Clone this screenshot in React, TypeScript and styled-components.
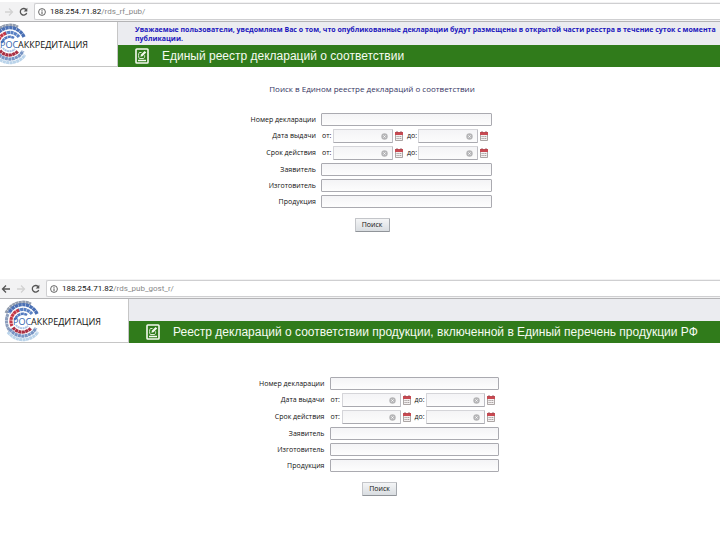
import React, { useId } from "react";
import styled, { createGlobalStyle } from "styled-components";

const GlobalStyle = createGlobalStyle`
  * { box-sizing: border-box; }
  body { margin: 0; background: #fff; overflow-x: hidden; }
  input, button { font: inherit; }
`;

const Page = styled.main`
  display: flex;
  flex-direction: column;
  gap: 47px;
  padding-top: 2px;
  font-family: "Open Sans", "Noto Sans", sans-serif;
  font-size: 7px;
  line-height: 10px;
  color: #111;
`;

const Registry = styled.section`
  display: flex;
  flex-direction: column;
`;

const BrowserBar = styled.div`
  display: flex;
  align-items: center;
  height: 20px;
  background: #f2f2f3;
  border-bottom: 1px solid #b4b4b6;
`;

const NavButtons = styled.div<{ $wide: boolean }>`
  display: flex;
  flex: none;
  align-items: center;
  justify-content: flex-end;
  gap: 5px;
  width: ${(p) => (p.$wide ? 46 : 34)}px;
  padding-right: 6px;
`;

const NavButton = styled.button`
  display: flex;
  flex: none;
  padding: 0;
  border: 0;
  background: none;
  color: #555;
  &:disabled { color: #d2d2d2; }
`;

const AddressBar = styled.div`
  display: flex;
  flex: 1;
  align-items: center;
  gap: 4px;
  height: 17px;
  padding-left: 3px;
  border: 1px solid #cfcfd1;
  border-right: 0;
  border-radius: 2px 0 0 2px;
  background: #fff;
`;

const Address = styled.span`
  font-family: Roboto, "Open Sans", sans-serif;
  font-size: 8px;
  color: #888;
  white-space: nowrap;
  b { font-weight: 400; color: #111; }
`;

const Header = styled.header<{ $wide: boolean }>`
  display: flex;
  height: ${(p) => (p.$wide ? 44 : 45)}px;
`;

const LogoLink = styled.a<{ $wide: boolean }>`
  position: relative;
  display: flex;
  flex: none;
  align-items: center;
  width: ${(p) => (p.$wide ? 129 : 118)}px;
  padding-left: ${(p) => (p.$wide ? 13 : 0)}px;
  overflow: hidden;
  border-right: 1px solid #c6c6c6;
  border-bottom: 1px solid #c6c6c6;
  background: #fff;
  text-decoration: none;
`;

const Emblem = styled.svg<{ $wide: boolean }>`
  position: absolute;
  top: 1px;
  left: ${(p) => (p.$wide ? 2 : -11)}px;
`;

const LogoText = styled.span`
  position: relative;
  padding-top: 2px;
  font-size: 9px;
  color: #111;
  white-space: nowrap;
  b { font-weight: 400; color: #2f63ad; }
`;

const HeaderBody = styled.div`
  display: flex;
  flex: 1;
  min-width: 0;
  flex-direction: column;
  background: #ebecf0;
`;

const Notice = styled.p`
  flex: 1;
  margin: 0;
  padding: 3px 4px 0 17px;
  font-family: "Open Sans", "Noto Sans", sans-serif;
  font-size: 7px;
  font-weight: 700;
  line-height: 9px;
  color: #1b16bd;
`;

const TitleBar = styled.div`
  display: flex;
  align-items: center;
  gap: 13px;
  height: 22px;
  padding-left: 17px;
  background: #307b1b;
  color: #f6fbf2;
`;

const Title = styled.h1`
  margin: 0;
  font-family: "Liberation Sans", Arial, sans-serif;
  font-size: 12px;
  font-weight: 400;
  line-height: 18px;
  white-space: nowrap;
`;

const Form = styled.form<{ $shifted: boolean }>`
  display: flex;
  flex-direction: column;
  align-items: center;
  padding-top: ${(p) => (p.$shifted ? 34 : 15)}px;
  padding-left: ${(p) => (p.$shifted ? 39 : 24)}px;
`;

const Caption = styled.h2`
  margin: 0 0 17px;
  font-size: 8px;
  font-weight: 400;
  line-height: 14px;
  color: #35355f;
`;

const Fields = styled.div<{ $width: number }>`
  display: grid;
  grid-template-columns: 68px ${(p) => p.$width}px;
  column-gap: 5px;
  row-gap: 3px;
  align-items: center;
  padding-right: 4px;
`;

const Label = styled.label`
  text-align: right;
  white-space: nowrap;
`;

const RowLabel = styled.span`
  text-align: right;
  white-space: nowrap;
`;

const TextInput = styled.input`
  width: 100%;
  min-width: 0;
  height: 13px;
  padding: 0 3px;
  border: 1px solid #aaaab0;
  border-radius: 1px;
  background: linear-gradient(#f4f4f6, #fdfdfd);
`;

const DateRow = styled.div`
  display: flex;
  align-items: center;
  gap: 2px;
  height: 14px;
  padding: 0 2px 0 1px;
`;

const DateLabel = styled.label`
  flex: none;
  width: 9px;
  white-space: nowrap;
`;

const DateBox = styled.div`
  display: flex;
  flex: 1;
  min-width: 0;
  align-items: center;
  height: 14px;
  padding-right: 4px;
  border: 1px solid #d5d5d9;
  border-right-color: #bdbdc3;
  border-bottom-color: #a9a9af;
  border-radius: 1px;
  background: linear-gradient(#f4f4f6, #fcfcfc);
`;

const DateInput = styled.input`
  flex: 1;
  width: 0;
  min-width: 0;
  padding: 0 2px;
  border: 0;
  background: none;
  line-height: 10px;
`;

const IconButton = styled.button`
  display: flex;
  flex: none;
  padding: 0;
  border: 0;
  background: none;
`;

const CalendarButton = styled(IconButton)`
  margin-right: 2px;
`;

const SearchButton = styled.button`
  width: 35px;
  height: 14px;
  margin-top: 10px;
  padding: 0;
  border: 1px solid #c3c5c9;
  border-bottom-color: #909499;
  border-right-color: #a4a8ad;
  border-radius: 1px;
  background: linear-gradient(#f4f5f6, #d9dde1);
  color: #111;
`;

function Arrow({ back = false }: { back?: boolean }) {
  return (
    <svg width="10" height="10" viewBox="0 0 10 10" fill="none" stroke="currentColor" strokeWidth="1.3">
      <path d={back ? "M9 5H1.5M5 1.5 1.5 5 5 8.5" : "M1 5h7.5M5 1.5 8.5 5 5 8.5"} />
    </svg>
  );
}

function ReloadIcon() {
  return (
    <svg width="9" height="10" viewBox="0 0 9 10">
      <path d="M7.1 2.6A3.3 3.3 0 1 0 7.7 6" fill="none" stroke="currentColor" strokeWidth="1.3" />
      <path d="M8.3.8v3.6H4.7z" fill="currentColor" />
    </svg>
  );
}

function InfoIcon() {
  return (
    <svg width="8" height="8" viewBox="0 0 8 8" fill="none" stroke="#555">
      <circle cx="4" cy="4" r="3.4" strokeWidth=".9" />
      <path d="M4 1.8v1M4 3.4v2.8" />
    </svg>
  );
}

function EmblemRings({ wide }: { wide: boolean }) {
  return (
    <Emblem $wide={wide} width="40" height="42" viewBox="0 0 40 42" fill="none" aria-hidden="true">
      <path d="M4 13A18.5 18.5 0 0 1 29 4" stroke="#929daf" strokeWidth="3" strokeDasharray="3 .4" />
      <path d="M6 32A18.5 18.5 0 0 0 36 32" stroke="#b9d3ea" strokeWidth="3" strokeDasharray="3 .4" />
      <path d="M35 14A15.5 15.5 0 0 0 7 13" stroke="#4a70b5" strokeWidth="3.4" strokeDasharray="3.4 .4" />
      <path d="M6 14A16 16 0 0 0 8 31" stroke="#8c9ebd" strokeWidth="3" strokeDasharray="3 .4" />
      <path d="M8 29A15 15 0 0 0 34 28" stroke="#7794c4" strokeWidth="3.2" strokeDasharray="3 .4" />
      <path d="M30 14A11.5 11.5 0 0 0 16 10.5" stroke="#5b82c4" strokeWidth="3.2" strokeDasharray="3 .4" />
      <path d="M17 10.2A11.5 11.5 0 0 0 10 26" stroke="#c33847" strokeWidth="3.2" strokeDasharray="3 .4" />
      <path d="M11 27.5A11.5 11.5 0 0 0 29 28" stroke="#a92f43" strokeWidth="3.2" strokeDasharray="3 .4" />
      <path d="M25 15A8 8 0 0 0 13 20" stroke="#527ac0" strokeWidth="2.6" strokeDasharray="3 .4" />
      <path d="M14 25A8 8 0 0 0 26 26" stroke="#abc5e5" strokeWidth="2" strokeDasharray="2 .5" />
    </Emblem>
  );
}

function RegistryIcon() {
  return (
    <svg width="14" height="16" viewBox="0 0 14 16" fill="none" aria-hidden="true">
      <rect x="1" y="1" width="12" height="14" rx=".8" stroke="#f5faef" strokeWidth="1.6" />
      <path d="M3 12.5h8" stroke="#f5faef" strokeWidth="1.5" />
      <path d="M6.5 4.5H4.3c-1 1.3-1 4.6 0 6h4.4c1-1 1.1-2 .9-3.2" stroke="#dcebd4" />
      <path d="m5.4 8.8.6-2.2L9.6 3l1.6 1.5-3.7 3.7z" fill="#f5faef" />
    </svg>
  );
}

function ClearIcon() {
  return (
    <svg width="7" height="7" viewBox="0 0 7 7">
      <circle cx="3.5" cy="3.5" r="3.2" fill="#b5b5b7" />
      <path d="m2.4 2.4 2.2 2.2m0-2.2L2.4 4.6" stroke="#fff" strokeWidth=".8" />
    </svg>
  );
}

function CalendarIcon() {
  return (
    <svg width="8" height="10" viewBox="0 0 8 10">
      <path d="M.5 2h7v7.5h-7z" fill="#f4f1f1" stroke="#98908f" strokeWidth=".8" />
      <path d="M0 1h8v3H0z" fill="#c84a52" />
      <path d="M2 0v2M6 0v2" stroke="#8b4a50" strokeWidth=".8" />
      <path d="M1.5 5.5h5M1.5 7.5h5" stroke="#a29b9b" strokeDasharray="1.2 .6" />
    </svg>
  );
}

function DateField({ label, name }: { label: string; name: string }) {
  const id = useId();
  return (
    <>
      <DateLabel htmlFor={id}>{label}</DateLabel>
      <DateBox>
        <DateInput id={id} name={name} type="text" />
        <IconButton type="button" aria-label="Очистить"><ClearIcon /></IconButton>
      </DateBox>
      <CalendarButton type="button" aria-label="Календарь"><CalendarIcon /></CalendarButton>
    </>
  );
}

function DateRange({ label, name }: { label: string; name: string }) {
  const id = useId();
  return (
    <>
      <RowLabel id={id}>{label}</RowLabel>
      <DateRow role="group" aria-labelledby={id}>
        <DateField label="от:" name={`${name}-from`} />
        <DateField label="до:" name={`${name}-to`} />
      </DateRow>
    </>
  );
}

function TextField({ label, name }: { label: string; name: string }) {
  const id = useId();
  return (
    <>
      <Label htmlFor={id}>{label}</Label>
      <TextInput id={id} name={name} type="text" />
    </>
  );
}

interface RegistryProps {
  path: string;
  title: string;
  notice?: string;
  caption?: string;
  wide?: boolean;
}

function RegistryPage({ path, title, notice, caption, wide = false }: RegistryProps) {
  return (
    <Registry>
      <BrowserBar>
        <NavButtons $wide={wide}>
          {wide && <NavButton aria-label="Назад"><Arrow back /></NavButton>}
          <NavButton aria-label="Вперёд" disabled><Arrow /></NavButton>
          <NavButton aria-label="Обновить"><ReloadIcon /></NavButton>
        </NavButtons>
        <AddressBar>
          <InfoIcon />
          <Address><b>188.254.71.82</b>{path}</Address>
        </AddressBar>
      </BrowserBar>
      <Header $wide={wide}>
        <LogoLink href="#" $wide={wide}>
          <EmblemRings wide={wide} />
          <LogoText><b>РОС</b>АККРЕДИТАЦИЯ</LogoText>
        </LogoLink>
        <HeaderBody>
          <Notice>{notice}</Notice>
          <TitleBar>
            <RegistryIcon />
            <Title>{title}</Title>
          </TitleBar>
        </HeaderBody>
      </Header>
      <Form $shifted={wide} onSubmit={(e) => e.preventDefault()}>
        {caption && <Caption>{caption}</Caption>}
        <Fields $width={wide ? 169 : 171}>
          <TextField label="Номер декларации" name="number" />
          <DateRange label="Дата выдачи" name="issued" />
          <DateRange label="Срок действия" name="valid" />
          <TextField label="Заявитель" name="applicant" />
          <TextField label="Изготовитель" name="manufacturer" />
          <TextField label="Продукция" name="product" />
        </Fields>
        <SearchButton type="submit">Поиск</SearchButton>
      </Form>
    </Registry>
  );
}

export default function App() {
  return (
    <>
      <GlobalStyle />
      <Page>
        <RegistryPage
          path="/rds_rf_pub/"
          notice="Уважаемые пользователи, уведомляем Вас о том, что опубликованные декларации будут размещены в открытой части реестра в течение суток с момента публикации."
          title="Единый реестр деклараций о соответствии"
          caption="Поиск в Едином реестре деклараций о соответствии"
        />
        <RegistryPage
          wide
          path="/rds_pub_gost_r/"
          title="Реестр деклараций о соответствии продукции, включенной в Единый перечень продукции РФ"
        />
      </Page>
    </>
  );
}
